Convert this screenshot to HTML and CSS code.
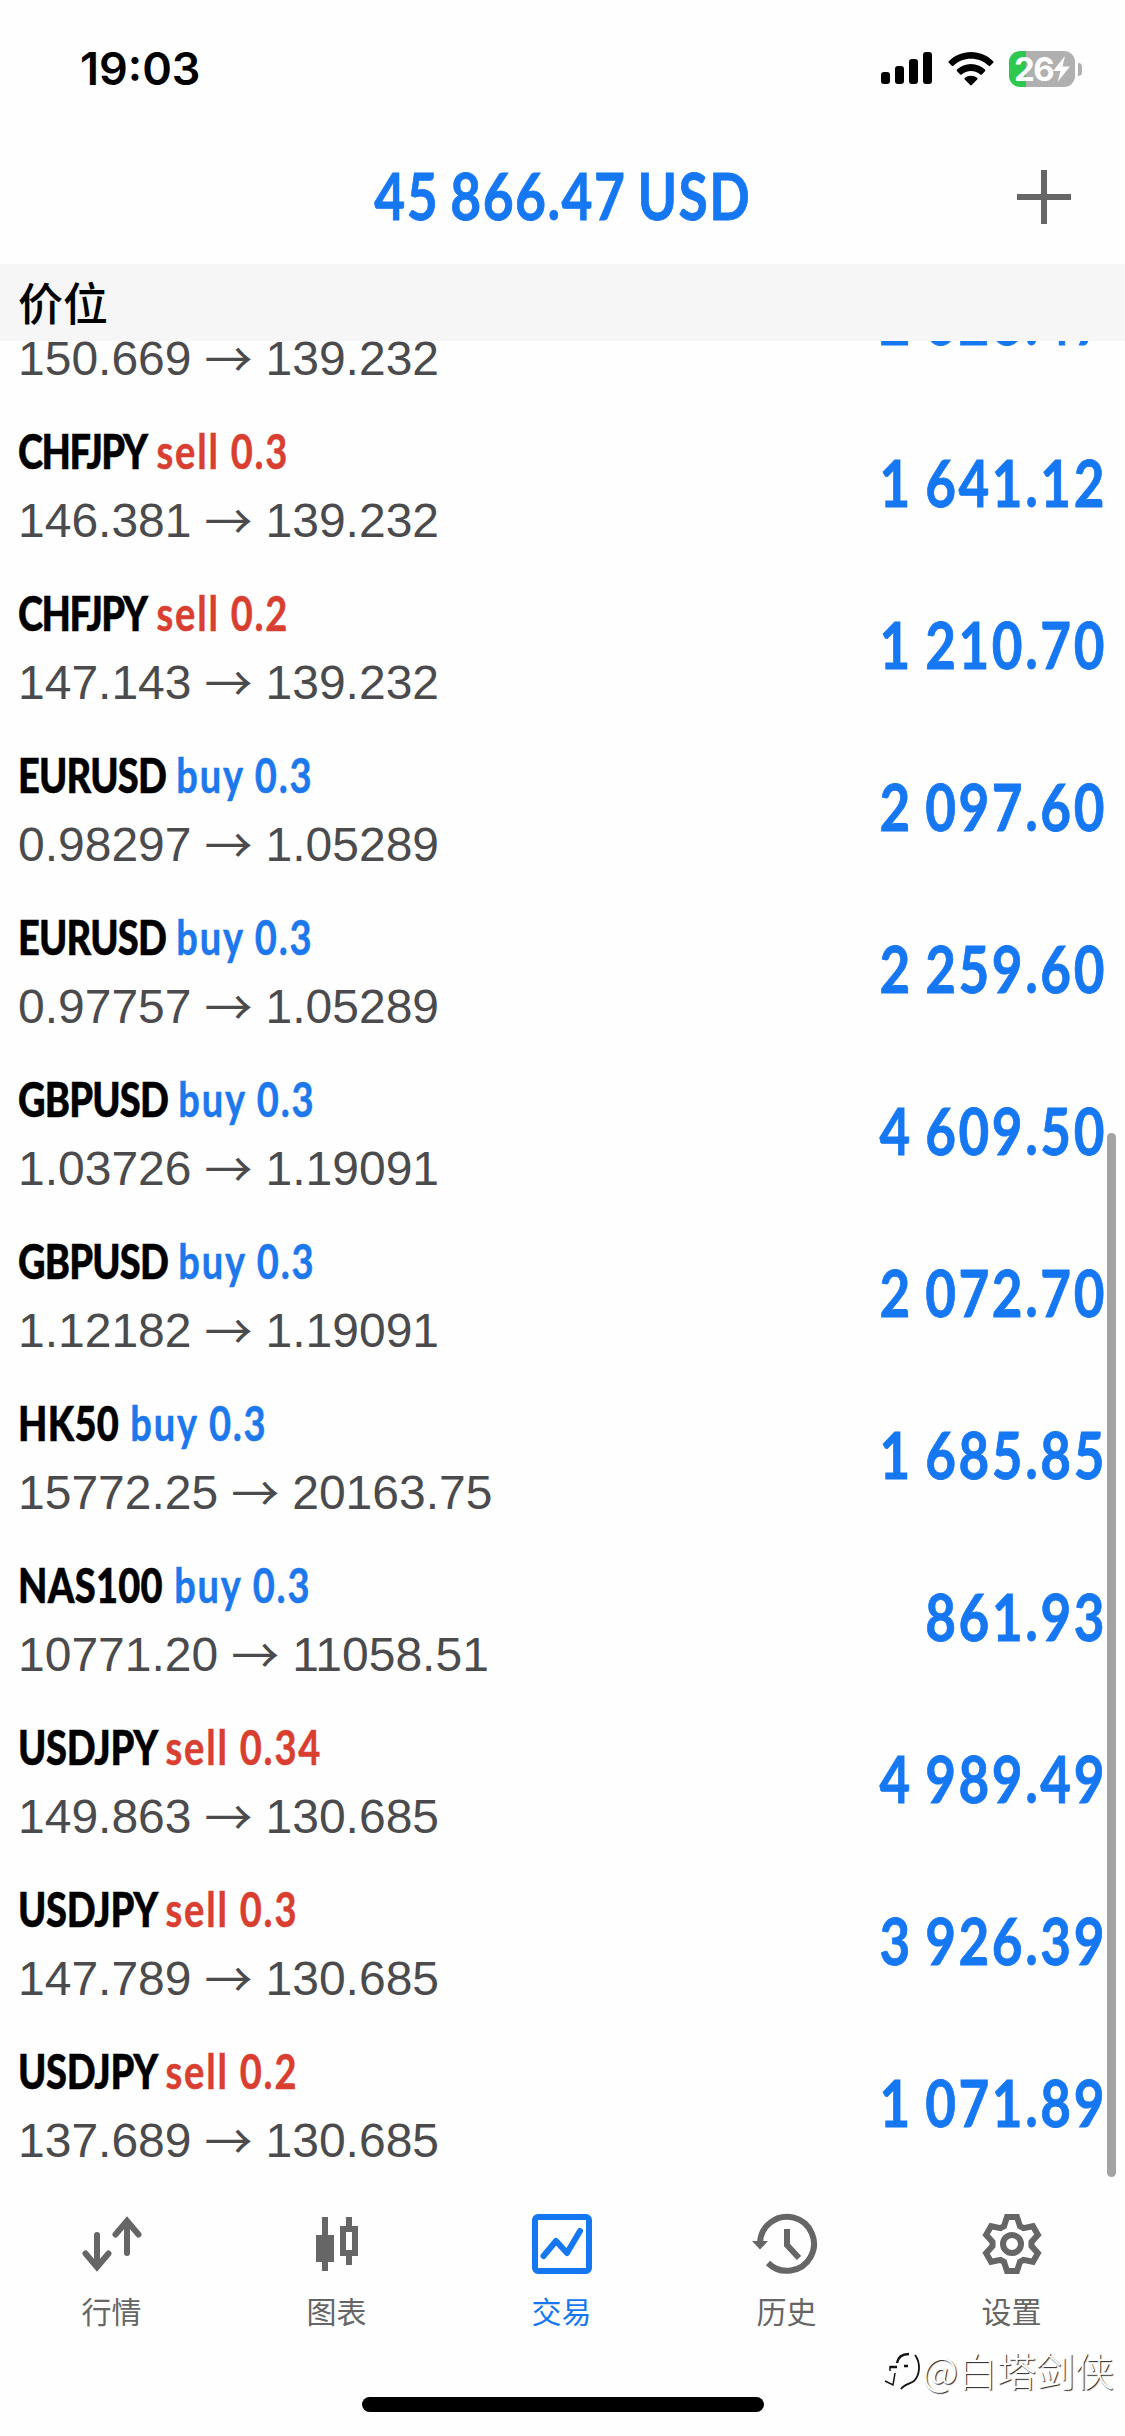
FILE: index.html
```html
<!DOCTYPE html>
<html lang="zh-CN">
<head>
<meta charset="utf-8">
<title>交易</title>
<link rel="stylesheet" href="styles.css">
</head>
<body>
<div class="app">
  <header class="status">
    <span class="clock">19:03</span>
    <div class="indicators">
      <svg class="signal" width="52" height="34" viewBox="0 0 52 34"><rect x="0" y="21" width="9" height="12" rx="3"/><rect x="14" y="15" width="9" height="18" rx="3"/><rect x="28" y="8" width="9" height="25" rx="3"/><rect x="42" y="1" width="9" height="32" rx="3"/></svg>
      <svg class="wifi" width="46" height="36" viewBox="0 0 46 36"><path d="M23 0C14.500 0 6.500 3.500 .8 9.200q-.8.800 0 1.600l3 3q.8.800 1.600 0C10 9.400 16.200 6.800 23 6.800s13 2.600 17.600 7q.8.800 1.600 0l3-3q.8-.8 0-1.600C39.500 3.500 31.500 0 23 0zM23 12c-5.400 0-10.300 2.100-14 5.600q-.8.800 0 1.600l3.200 3.200q.7.700 1.500 0C16.200 20.200 19.400 18.900 23 18.900s6.800 1.300 9.300 3.500q.8.700 1.500 0l3.200-3.200q.8-.8 0-1.600C33.300 14.100 28.400 12 23 12zM23 23.700c-2.400 0-4.500.8-6.200 2.300q-.9.800 0 1.600l5.400 5.500q.8.800 1.600 0l5.400-5.500q.9-.8 0-1.600C27.500 24.500 25.400 23.700 23 23.700z"/></svg>
      <div class="battery"><span>26</span><svg width="17" height="26" viewBox="0 0 17 26"><path d="M12 0L0 15h7.500L4.500 26 17 10.500H9.500z" fill="#fff"/></svg></div>
      <i class="battery-tip"></i>
    </div>
  </header>

  <div class="navbar">
    <h1 class="total"><span class="narrow">45 866.47 USD</span></h1>
    <svg class="add" width="54" height="54" viewBox="0 0 54 54"><path d="M27 0v54M0 27h54" stroke="#666" stroke-width="6"/></svg>
  </div>

  <h2 class="section">价位</h2>

  <main class="list">
    <div class="rows">
      <div class="row"><div class="info"><div class="deal"><b class="tight">CHFJPY</b> <span class="sell">sell 0.4</span></div><div class="price">150.669<i>→</i>139.232</div></div><div class="profit">2 628.47</div></div>
      <div class="row"><div class="info"><div class="deal"><b class="tight">CHFJPY</b> <span class="sell">sell 0.3</span></div><div class="price">146.381<i>→</i>139.232</div></div><div class="profit">1 641.12</div></div>
      <div class="row"><div class="info"><div class="deal"><b class="tight">CHFJPY</b> <span class="sell">sell 0.2</span></div><div class="price">147.143<i>→</i>139.232</div></div><div class="profit">1 210.70</div></div>
      <div class="row"><div class="info"><div class="deal"><b class="snug">EURUSD</b> <span class="buy">buy 0.3</span></div><div class="price">0.98297<i>→</i>1.05289</div></div><div class="profit">2 097.60</div></div>
      <div class="row"><div class="info"><div class="deal"><b class="snug">EURUSD</b> <span class="buy">buy 0.3</span></div><div class="price">0.97757<i>→</i>1.05289</div></div><div class="profit">2 259.60</div></div>
      <div class="row"><div class="info"><div class="deal"><b class="snug">GBPUSD</b> <span class="buy">buy 0.3</span></div><div class="price">1.03726<i>→</i>1.19091</div></div><div class="profit">4 609.50</div></div>
      <div class="row"><div class="info"><div class="deal"><b class="snug">GBPUSD</b> <span class="buy">buy 0.3</span></div><div class="price">1.12182<i>→</i>1.19091</div></div><div class="profit">2 072.70</div></div>
      <div class="row"><div class="info"><div class="deal"><b class="index">HK50</b> <span class="buy">buy 0.3</span></div><div class="price">15772.25<i>→</i>20163.75</div></div><div class="profit">1 685.85</div></div>
      <div class="row"><div class="info"><div class="deal"><b class="index">NAS100</b> <span class="buy">buy 0.3</span></div><div class="price">10771.20<i>→</i>11058.51</div></div><div class="profit">861.93</div></div>
      <div class="row"><div class="info"><div class="deal"><b class="jpy">USDJPY</b> <span class="sell">sell 0.34</span></div><div class="price">149.863<i>→</i>130.685</div></div><div class="profit">4 989.49</div></div>
      <div class="row"><div class="info"><div class="deal"><b class="jpy">USDJPY</b> <span class="sell">sell 0.3</span></div><div class="price">147.789<i>→</i>130.685</div></div><div class="profit">3 926.39</div></div>
      <div class="row"><div class="info"><div class="deal"><b class="jpy">USDJPY</b> <span class="sell">sell 0.2</span></div><div class="price">137.689<i>→</i>130.685</div></div><div class="profit">1 071.89</div></div>
    </div>
    <div class="scrollbar"></div>
  </main>

  <nav class="tabs">
    <a class="tab"><svg width="66" height="66" viewBox="0 0 66 66"><g fill="none" stroke="currentColor" stroke-width="6" stroke-linecap="round"><path d="M18 24v32M6.500 42.500L18 56l11.500-13.500M48 42V10M36.500 23.500L48 10l11.500 13.500"/></g></svg>行情</a>
    <a class="tab"><svg width="66" height="66" viewBox="0 0 66 66"><path d="M18 6h6v18h6v27h-6v9h-6v-9h-6V24h6zM42 6h6v9h6v30h-6v9h-6v-9h-6V15h6zM42 21v18h6V21z" fill="currentColor" fill-rule="evenodd"/></svg>图表</a>
    <a class="tab active"><svg width="66" height="66" viewBox="0 0 66 66"><g fill="none" stroke="currentColor" stroke-width="6"><rect x="6" y="6" width="54" height="54" rx="3"/><path d="M14.500 45L27 30l11 12L51 20" stroke-linecap="round" stroke-linejoin="round"/></g></svg>交易</a>
    <a class="tab"><svg width="66" height="66" viewBox="0 0 66 66"><g fill="none" stroke="currentColor" stroke-width="6"><path d="M6 33A27 27 0 1 1 14 52"/><path d="M33 18v16l12 13"/></g><path d="M-2 30h16l-8 8.500z" fill="currentColor"/></svg>历史</a>
    <a class="tab"><svg width="66" height="66" viewBox="0 0 66 66"><g fill="none" stroke="currentColor" stroke-width="6" transform="translate(33 33)"><circle r="9"/><path d="M-5-27H5L8-17.900 11.500-15.900 20.900-17.800 25.900-9.200 19.500-2V2L25.900 9.200 20.900 17.800 11.500 15.900 8 17.900 5 27H-5L-8 17.900-11.500 15.900-20.900 17.800-25.900 9.200-19.500 2V-2L-25.900-9.200-20.900-17.800-11.500-15.900-8-17.900z"/></g></svg>设置</a>
  </nav>

  <footer class="bottom">
    <div class="home"></div>
    <div class="watermark"><svg width="40" height="44" viewBox="0 0 40 44"><g fill="none" stroke="#111"><path d="M14 14c1-6 5-9 12-9" stroke-width="2.500"/><path d="M32 6c6 8 5 20-1 26-4 3-10 3-13 8" stroke-width="1.800"/><path d="M7 18h7M21 17h4" stroke-width="2.500"/><path d="M7 17v5M12 24l-2 12-8-4" stroke-width="1.500"/></g></svg><span>@白塔剑侠</span></div>
  </footer>
</div>
</body>
</html>
```
FILE: styles.css
```css
* { box-sizing: border-box; }
body { margin: 0; background: #fff; color: #000; font-family: "Liberation Sans", "Noto Sans CJK SC", sans-serif; }
.app { width: 1125px; height: 2436px; overflow: hidden; display: flex; flex-direction: column; background: #fefefe; }

.status { height: 132px; padding: 0 43px 0 80px; display: flex; align-items: flex-start; justify-content: space-between; }
.clock { margin-top: 42px; font: 600 45px/54px Inter, sans-serif; }
.indicators { display: flex; align-items: flex-start; padding-top: 51px; }
.signal { margin-right: 15px; }
.wifi { margin: 1px 15px 0 0; }
.battery { width: 66px; height: 36px; border-radius: 11px; background: linear-gradient(90deg, #2fc84f 17px, #b0b0b0 17px); color: #fff; display: flex; align-items: center; justify-content: center; font: 700 33px/36px Inter, sans-serif; letter-spacing: -1.5px; }
.battery-tip { width: 4px; height: 13px; margin: 12px 0 0 3px; border-radius: 0 6px 6px 0; background: #b0b0b0; }

.navbar { height: 132px; padding: 0 54px 2px; display: grid; grid-template-columns: 54px 1fr 54px; align-items: center; }
.total { grid-column: 2; margin: -4px 0 0; text-align: center; font: 700 65px/84px Lato, sans-serif; color: #1677f2; white-space: nowrap; }
.narrow { display: inline-block; letter-spacing: 1.8px; word-spacing: -4px; -webkit-text-stroke: .8px; transform: scaleX(.82); }

.section { height: 77px; margin: 0; padding-left: 18px; background: #f6f6f6; font: 500 45px/75px "Noto Sans CJK SC", sans-serif; }

.list { position: relative; height: 1844px; overflow: hidden; display: flex; flex-direction: column; justify-content: flex-end; }
.row { height: 162px; padding: 0 18px; display: flex; justify-content: space-between; align-items: center; }
.info { display: flex; flex-direction: column; padding-top: 3px; }
.deal { height: 70px; font: 700 47px/68px Lato, sans-serif; white-space: nowrap; -webkit-text-stroke: .5px; transform: scaleX(.81); transform-origin: left; }
.deal span { margin-left: 1px; letter-spacing: 2.2px; }
.tight { letter-spacing: -1.9px; }
.snug { letter-spacing: -1px; }
.jpy { letter-spacing: -.4px; margin-right: -3px; }
.index { letter-spacing: .3px; margin-right: 1.5px; }
.sell { color: #d93f31; }
.buy { color: #1c78ec; }
.price { height: 68px; font-size: 48px; line-height: 68px; color: #4b4b4d; display: flex; }
.price i { width: 74px; font: 400 48px/63px "Noto Sans CJK SC", sans-serif; text-align: center; }
.profit { padding-bottom: 4px; font: 700 65px/80px Lato, sans-serif; letter-spacing: 3.2px; word-spacing: -4px; color: #1677f2; white-space: nowrap; -webkit-text-stroke: .8px; transform: scaleX(.815); transform-origin: right; }
.scrollbar { position: absolute; right: 9px; top: 792px; width: 9px; height: 1044px; border-radius: 5px; background: #a3a3a3; }

.tabs { height: 160px; display: grid; grid-template-columns: repeat(5, 225px); margin-left: -1px; padding-top: 26px; }
.tab { display: flex; flex-direction: column; align-items: center; gap: 8px; color: #666; font: 400 30px/50px "Noto Sans CJK SC", sans-serif; }
.tab svg { overflow: visible; }
.active { color: #1677f2; }

.bottom { position: relative; flex: 1; }
.home { width: 402px; height: 15px; margin: 52px auto 0; border-radius: 8px; background: #000; }
.watermark { position: absolute; right: 11px; top: -2px; display: flex; align-items: center; color: #fff; font: 300 39px/52px "Noto Sans CJK SC", sans-serif; text-shadow: 1px 1px 1px #222; }
.watermark svg { margin-top: 4px; }
```
